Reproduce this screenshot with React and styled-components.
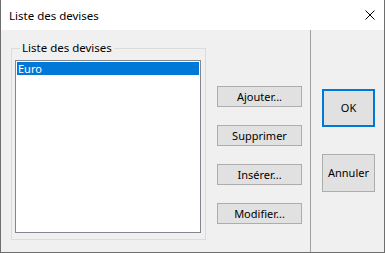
import React from 'react'
import styled, { createGlobalStyle } from 'styled-components'

const Global = createGlobalStyle`
html, body { margin:0; padding:0; background:#fff; }
body { font-family: "Noto Sans", "Liberation Sans", sans-serif; font-size:11px; color:#000; }
`

const Window = styled.div`
width:385px;
height:253px;
box-sizing:border-box;
border:1px solid #6e6e6e;
border-top:0;
background:#f0f0f0;
display:flex;
flex-direction:column;
`
const TitleBar = styled.div`
height:30px;
flex:none;
background:#fff;
display:flex;
align-items:center;
justify-content:space-between;
padding-left:8px;
padding-right:9px;
font-size:11.5px;
`
const Body = styled.div`
flex:1;
display:flex;
`
const LeftPane = styled.div`
width:310px;
box-sizing:border-box;
border-right:1px solid #a0a0a0;
display:flex;
padding:10px 8px 0 10px;
`
const Group = styled.fieldset`
margin:0;
width:195px;
height:200px;
box-sizing:border-box;
border:1px solid #dcdcdc;
padding:4px 4px 6px 3px;
display:flex;
flex-direction:column;
`
const Legend = styled.legend`
padding:0 2px;
margin-left:5px;
line-height:16px;
font-size:11.5px;
`
const List = styled.div`
flex:1;
background:#fff;
border:1px solid #828790;
padding:1px;
`
const Item = styled.div`
height:13px;
line-height:13px;
padding-left:1px;
background:${p => p.selected ? '#0078d7' : 'transparent'};
color:${p => p.selected ? '#fff' : '#000'};
`
const Buttons = styled.div`
margin-left:11px;
padding-top:46px;
display:flex;
flex-direction:column;
gap:18px;
`
const Button = styled.button`
font:inherit;
width:85px;
height:21px;
box-sizing:border-box;
padding:0 0 1px;
background:#e1e1e1;
border:${p => p.primary ? '2px solid #0078d7' : '1px solid #adadad'};
color:#000;
`
const BigButton = styled(Button)`
width:53px;
height:38px;
`
const RightPane = styled.div`
padding:59px 0 0 11px;
display:flex;
flex-direction:column;
gap:27px;
`

const Close = () => (
  <svg width="10" height="10" viewBox="0 0 10 10">
    <path d="M0.5 0.5 L9.5 9.5 M9.5 0.5 L0.5 9.5" stroke="#000" strokeWidth="1" />
  </svg>
)

export default function App() {
  return (
    <Window>
      <Global />
      <TitleBar>
        <span>Liste des devises</span>
        <Close />
      </TitleBar>
      <Body>
        <LeftPane>
          <Group>
            <Legend>Liste des devises</Legend>
            <List>
              <Item selected>Euro</Item>
            </List>
          </Group>
          <Buttons>
            <Button>Ajouter...</Button>
            <Button>Supprimer</Button>
            <Button>Insérer...</Button>
            <Button>Modifier...</Button>
          </Buttons>
        </LeftPane>
        <RightPane>
          <BigButton primary>OK</BigButton>
          <BigButton>Annuler</BigButton>
        </RightPane>
      </Body>
    </Window>
  )
}
